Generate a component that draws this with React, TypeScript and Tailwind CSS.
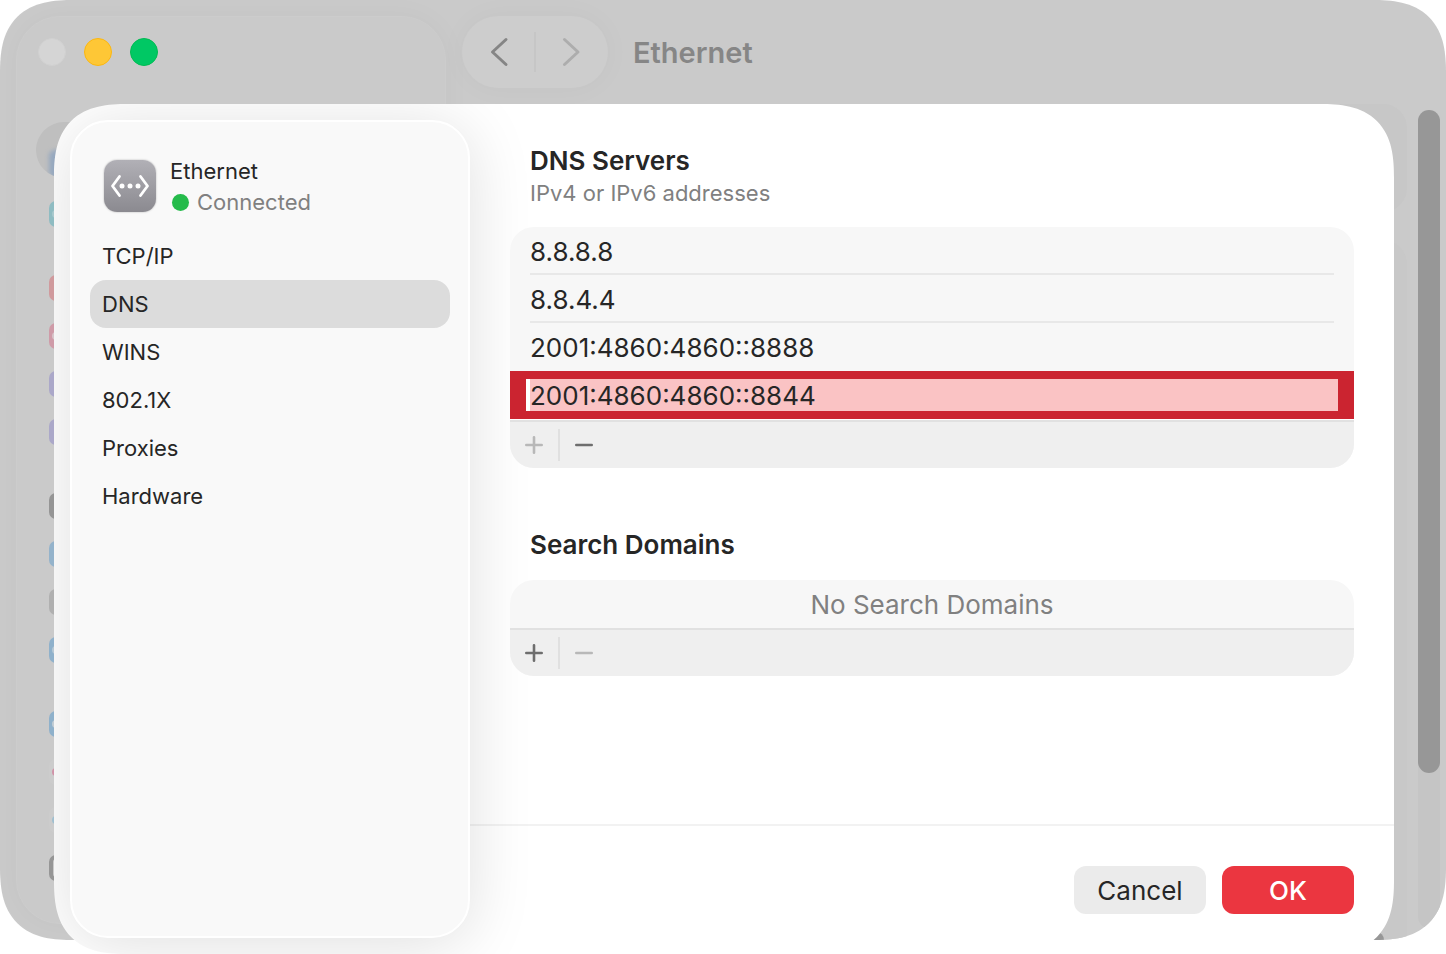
import { useState } from 'react'

const TABS = ['TCP/IP', 'DNS', 'WINS', '802.1X', 'Proxies', 'Hardware']

const SERVERS = ['8.8.8.8', '8.8.4.4', '2001:4860:4860::8888']

// Sidebar icons of the settings window, grouped as they are listed
const SIDEBAR_GROUPS = [
  [{ box: 'bg-[#8fbcc2]', mark: 'bg-[#a9c9cd]' }],
  [
    { box: 'bg-[#d09a9d]', mark: '' },
    { box: 'bg-[#cf9ba8]', mark: 'bg-[#d8c5ca]' },
    { box: 'bg-[#aba8c9]', mark: '' },
    { box: 'bg-[#aba8c9]', mark: '' }
  ],
  [
    { box: 'bg-[#959595]', mark: '' },
    { box: 'bg-[#94b3cb]', mark: '' },
    { box: 'bg-[#b0b0b0]', mark: '' },
    { box: 'bg-[#8fb1cb]', mark: 'bg-[#b7c8d4]' }
  ],
  [
    { box: 'bg-[#8fb1cb]', mark: 'bg-[#c3cdd4]' },
    { box: 'bg-[#cccccc]', mark: 'bg-[#d193a8]' },
    { box: 'bg-[#cccccc]', mark: 'bg-[#9fbfd0]' },
    { box: 'bg-[#cccccc] border-4 border-[#969696]', mark: '' }
  ]
]

function Chevron({ direction }: { direction: 'left' | 'right' }) {
  return (
    <svg viewBox="0 0 20 32" className="w-5 h-8" fill="none" stroke="currentColor" strokeWidth="3" strokeLinecap="round" strokeLinejoin="round">
      <path d={direction === 'left' ? 'M17 3.5 3.5 16 17 28.5' : 'M3.5 3.5 17 16 3.5 28.5'} />
    </svg>
  )
}

function EthernetIcon() {
  return (
    <svg viewBox="0 0 52 52" className="w-[52px] h-[52px] shrink-0 rounded-[13px] shadow-[0_0_2px_rgba(0,0,0,0.3)]" aria-hidden="true">
      <defs>
        <linearGradient id="ethernet" x1="0" y1="0" x2="0" y2="1">
          <stop offset="0" stopColor="#b1b0b6" />
          <stop offset="1" stopColor="#8b8a90" />
        </linearGradient>
      </defs>
      <rect width="52" height="52" fill="url(#ethernet)" />
      <g fill="none" stroke="#fff" strokeWidth="2.8" strokeLinecap="round" strokeLinejoin="round">
        <path d="M15.5 16.5 8.5 26l7 9.5" />
        <path d="M36.5 16.5 43.5 26l-7 9.5" />
      </g>
      <g fill="#fff">
        <circle cx="18" cy="26" r="2.5" />
        <circle cx="26" cy="26" r="2.5" />
        <circle cx="34" cy="26" r="2.5" />
      </g>
    </svg>
  )
}

function ListFooter({ label, canAdd, canRemove }: { label: string; canAdd: boolean; canRemove: boolean }) {
  const button = 'flex w-12 items-center justify-center text-[#6e6e6e] disabled:text-[#b8b8b8]'
  return (
    <div className="flex items-center h-12 border-t-2 border-[#e1e1e1] bg-[#efefef]">
      <button type="button" className={button} disabled={!canAdd} aria-label={`Add ${label}`}>
        <svg viewBox="0 0 20 20" className="w-5 h-5" stroke="currentColor" strokeWidth="2.6" strokeLinecap="round">
          <path d="M10 2.3v15.4M2.3 10h15.4" />
        </svg>
      </button>
      <span className="w-[2px] h-8 bg-[#e0e0e0]" />
      <button type="button" className={button} disabled={!canRemove} aria-label={`Remove ${label}`}>
        <svg viewBox="0 0 20 20" className="w-5 h-5" stroke="currentColor" strokeWidth="2.6" strokeLinecap="round">
          <path d="M2.3 10h15.4" />
        </svg>
      </button>
    </div>
  )
}

function SettingsWindow() {
  return (
    <div className="flex flex-1 overflow-hidden rounded-[60px] bg-[#cacaca] supports-[corner-shape:squircle]:rounded-[74px] supports-[corner-shape:squircle]:[corner-shape:superellipse(1.4)]">
      <aside className="w-[430px] shrink-0 m-4 rounded-[44px] border border-[#cccccc] bg-[#cacaca] pt-[21px] shadow-[0_0_30px_rgba(0,0,0,0.03)]">
        <div className="flex gap-[18px] pl-[21px]">
          <button type="button" aria-label="Close" className="w-7 h-7 rounded-full border border-[#d0d0d0] bg-[#d5d5d5]" />
          <button type="button" aria-label="Minimize" className="w-7 h-7 rounded-full border border-[#fbb711] bg-[#fec736]" />
          <button type="button" aria-label="Zoom" className="w-7 h-7 rounded-full border border-[#00bb52] bg-[#00c864]" />
        </div>
        <div className="flex items-end h-14 mt-14 mx-[19px] pl-[13px] overflow-hidden rounded-full bg-[#bfbfbf]">
          <span className="w-7 h-7 rounded-md bg-[#96a8bf] blur-[2px]" />
        </div>
        <div className="flex flex-col gap-[26px] mt-3 pl-8">
          {SIDEBAR_GROUPS.map((group, i) => (
            <ul key={i}>
              {group.map(({ box, mark }, j) => (
                <li key={j} className="flex items-center h-12">
                  <span className={`flex items-center justify-center w-[26px] h-[26px] rounded-[7px] ${box}`}>
                    <span className={`w-5 h-2 rounded-full ${mark}`} />
                  </span>
                </li>
              ))}
            </ul>
          ))}
        </div>
      </aside>

      <div className="flex flex-1 flex-col">
        <header className="flex items-center gap-[25px] pt-4">
          <div className="flex items-center justify-between w-[146px] h-[72px] px-[27px] rounded-full bg-[#cdcdcd] shadow-[0_0_30px_rgba(0,0,0,0.03)]">
            <button type="button" aria-label="Back" className="text-[#858585]">
              <Chevron direction="left" />
            </button>
            <span className="w-[2px] h-10 bg-[#c6c6c6]" />
            <button type="button" aria-label="Forward" disabled className="text-[#adadad]">
              <Chevron direction="right" />
            </button>
          </div>
          <h1 className="pt-[2px] text-[29px] font-semibold text-[#868686]">Ethernet</h1>
        </header>
        <div className="flex flex-1 flex-col mt-4">
          <div className="h-[108px] rounded-[24px] bg-[#c7c7c7]" />
          <div className="flex flex-1 items-end justify-end mt-7 pr-[23px] rounded-t-[24px] bg-[#c8c8c8]">
            <button type="button" aria-label="Help" className="w-3 h-2 rounded-tr-full bg-[#979797]" />
          </div>
        </div>
      </div>

      <div className="w-[22px] mt-[110px] mb-3 ml-[11px] mr-[6px] rounded-full bg-[#c5c5c5]">
        <div className="h-[81%] rounded-full bg-[#979797]" />
      </div>
    </div>
  )
}

export default function App() {
  const [tab, setTab] = useState('DNS')

  return (
    <main className="relative flex flex-col min-h-screen pb-[14px] bg-white font-['Inter','Liberation_Sans',sans-serif] text-[#262626]">
      <SettingsWindow />

      {/* Sheet over the settings window */}
      <div
        role="dialog"
        aria-label="Ethernet"
        className="absolute top-[104px] right-[52px] bottom-0 left-[54px] flex overflow-hidden rounded-[60px] bg-white supports-[corner-shape:squircle]:rounded-[74px] supports-[corner-shape:squircle]:[corner-shape:superellipse(1.4)]"
      >
        <aside className="w-[400px] shrink-0 m-4 px-[18px] pt-[34px] rounded-[38px] border-2 border-white bg-[#f9f9f9] shadow-[0_6px_64px_rgba(0,0,0,0.13)]">
          <div className="flex items-center gap-[14px] h-[60px] px-[14px]">
            <EthernetIcon />
            <div className="pt-px text-[22px] leading-[31px]">
              <p>Ethernet</p>
              <p className="flex items-center gap-2 text-[#808080]">
                <span className="w-[17px] h-[17px] ml-[2px] rounded-full bg-[#25bb4b]" />
                Connected
              </p>
            </div>
          </div>
          <nav className="flex flex-col mt-4">
            {TABS.map((name) => (
              <button
                key={name}
                type="button"
                onClick={() => setTab(name)}
                aria-current={name === tab ? 'page' : undefined}
                className={`h-12 px-3 rounded-2xl text-left text-[22px] ${name === tab ? 'bg-[#dcdcdc]' : ''}`}
              >
                {name}
              </button>
            ))}
          </nav>
        </aside>

        <div className="flex flex-1 flex-col -ml-4">
          <div className="flex-1 px-10 pt-[41px]">
            <section>
              <h2 className="px-5 text-[26px] leading-8 font-semibold">DNS Servers</h2>
              <p className="px-5 text-[22px] leading-8 text-[#808080]">IPv4 or IPv6 addresses</p>
              <div className="mt-[18px] overflow-hidden rounded-[24px] bg-[#f7f7f7]">
                <ul className="text-[26px]">
                  {SERVERS.map((server) => (
                    <li key={server} className="group px-5">
                      <div className="flex items-center h-12 pt-[2px] border-b-2 border-[#e8e8e8] group-last:border-transparent">{server}</div>
                    </li>
                  ))}
                </ul>
                <div className="border-b border-white">
                  <div className="flex h-12 px-4 py-2 bg-[#cb2430]">
                    <input
                      type="text"
                      aria-label="DNS server address"
                      defaultValue="2001:4860:4860::8844"
                      className="w-full pt-px border-l-4 border-white bg-[#fac3c4] text-[26px] outline-none"
                    />
                  </div>
                </div>
                <ListFooter label="DNS server" canAdd={false} canRemove />
              </div>
            </section>

            <section className="mt-[61px]">
              <h2 className="px-5 text-[26px] leading-8 font-semibold">Search Domains</h2>
              <div className="mt-[19px] overflow-hidden rounded-[24px] bg-[#f7f7f7]">
                <p className="flex items-center justify-center h-12 text-[26px] text-[#808080]">No Search Domains</p>
                <ListFooter label="search domain" canAdd canRemove={false} />
              </div>
            </section>
          </div>

          <footer className="flex justify-end gap-4 p-10 border-t-2 border-black/5 text-[26px]">
            <button type="button" className="w-[132px] h-12 rounded-xl bg-[#ebebeb]">Cancel</button>
            <button type="button" className="w-[132px] h-12 rounded-xl bg-[#eb3640] font-medium text-white">OK</button>
          </footer>
        </div>
      </div>
    </main>
  )
}
